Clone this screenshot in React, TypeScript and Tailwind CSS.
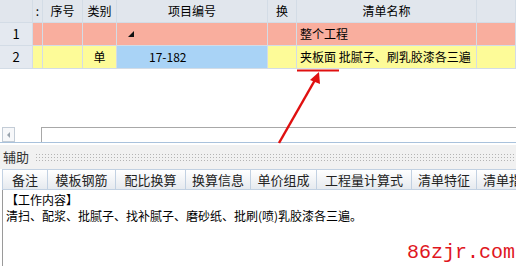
import React from "react";

const cols = "grid grid-cols-[33px_10px_40px_34px_151px_29px_180px_1fr]";

const tabs = [
  { label: "备注", w: "w-[45px]" },
  { label: "模板钢筋", w: "w-[68px]" },
  { label: "配比换算", w: "w-[70px]" },
  { label: "换算信息", w: "w-[65px]" },
  { label: "单价组成", w: "w-[66px]" },
  { label: "工程量计算式", w: "w-[95px]" },
  { label: "清单特征", w: "w-[65px]" },
  { label: "清单指引", w: "w-[65px]" },
];

function Cell({ className = "", children }: { className?: string; children?: React.ReactNode }) {
  return (
    <div className={`flex h-[23px] items-center border-r border-b border-[#d3dce6] overflow-hidden whitespace-nowrap ${className}`}>
      {children}
    </div>
  );
}

export default function App() {
  return (
    <div
      className="relative h-[266px] w-[516px] overflow-hidden bg-white text-[12px] text-black"
      style={{ fontFamily: '"Noto Sans CJK SC", "Noto Sans", sans-serif' }}
    >
      {/* grid */}
      <div className="h-[127px]">
        <div className={`${cols} bg-[#e1e6ed]`}>
          <Cell className="border-[#c4d2e2]" />
          <Cell className="justify-center border-[#c4d2e2]">:</Cell>
          <Cell className="justify-center border-[#c4d2e2]">序号</Cell>
          <Cell className="justify-center border-[#c4d2e2]">类别</Cell>
          <Cell className="justify-center border-[#c4d2e2]">项目编号</Cell>
          <Cell className="justify-center border-[#c4d2e2]">换</Cell>
          <Cell className="justify-center border-[#c4d2e2]">清单名称</Cell>
          <Cell className="border-[#c4d2e2]" />
        </div>
        <div className={`${cols} bg-[#f9ae9e]`}>
          <Cell className="justify-center bg-[#e4e9f0] border-[#c4d2e2] text-[13px]">1</Cell>
          <Cell />
          <Cell />
          <Cell />
          <Cell className="pl-[11px]">
            <span className="block h-0 w-0 border-b-[6px] border-l-[6px] border-b-[#111] border-l-transparent" />
          </Cell>
          <Cell />
          <Cell className="pl-[3px]">整个工程</Cell>
          <Cell />
        </div>
        <div className={`${cols} bg-[#fdfb98]`}>
          <Cell className="justify-center bg-[#e4e9f0] border-[#c4d2e2] text-[13px]">2</Cell>
          <Cell />
          <Cell />
          <Cell className="justify-center">单</Cell>
          <Cell className="bg-[#a9d3f6] pl-[32px]">17-182</Cell>
          <Cell />
          <Cell className="pl-[3px]">夹板面 批腻子、刷乳胶漆各三遍</Cell>
          <Cell />
        </div>
      </div>

      {/* horizontal scrollbar */}
      <div className="flex h-[16px] border-b border-[#a9c2dc]">
        <div className="ml-[2px] flex h-[15px] w-[13px] items-center justify-center border border-[#c3ccd6] bg-[#f7f8fa]">
          <span className="block h-0 w-0 border-y-[3px] border-r-[3px] border-y-transparent border-r-[#9aa4ae]" />
        </div>
        <div className="ml-[26px] h-[15px] flex-1 border-t border-l border-[#a8a8a8] bg-white" />
      </div>

      {/* aux panel header */}
      <div className="mt-[2px] flex h-[24px] items-center bg-[#f1f1f1] pl-[3px]">
        <span className="text-[13px] text-[#333]">辅助</span>
        <div className="ml-[6px] h-[8px] flex-1 bg-[radial-gradient(#b4b4b4_0.7px,transparent_0.8px)] bg-[length:3px_3px]" />
      </div>

      {/* tabs */}
      <div className="ml-[2px] flex h-[21px] border-y border-l border-[#c2d1e2] bg-gradient-to-b from-white to-[#e6eaef]">
        {tabs.map((t) => (
          <div
            key={t.label}
            className={`${t.w} shrink-0 flex items-center justify-center border-r border-[#c2d1e2] text-[13px] text-[#222] whitespace-nowrap`}
          >
            {t.label}
          </div>
        ))}
      </div>

      {/* content */}
      <div className="ml-[2px] h-[80px] border-l border-[#9a9a9a] pl-[3px] pt-[2px] leading-[15px]">
        <div>【工作内容】</div>
        <div className="mt-[1px]">清扫、配浆、批腻子、找补腻子、磨砂纸、批刷(喷)乳胶漆各三遍。</div>
      </div>

      {/* watermark */}
      <div
        className="absolute right-[1px] bottom-[3px] text-[20px] leading-[20px] text-[#e0161e]"
        style={{ fontFamily: '"Liberation Mono", monospace' }}
      >
        86zjr.com
      </div>

      {/* red annotation arrow */}
      <svg className="pointer-events-none absolute left-0 top-0" width="516" height="266">
        <line x1="297" y1="70.5" x2="339" y2="70.5" stroke="#e01010" strokeWidth="2" />
        <line x1="279" y1="143" x2="315" y2="80" stroke="#e01010" strokeWidth="2.5" />
        <polygon points="319,72 310,80 320,84" fill="#e01010" />
      </svg>
    </div>
  );
}
